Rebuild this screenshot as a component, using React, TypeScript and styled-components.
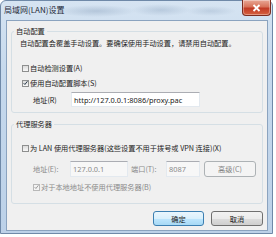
import React from "react";
import styled, { createGlobalStyle, css } from "styled-components";

const CJK = `"Noto Sans CJK SC", "Noto Sans", sans-serif`;
const LATIN = `"Noto Sans", "Noto Sans CJK SC", sans-serif`;

const GlobalStyle = createGlobalStyle`
  html, body {
    margin: 0;
    padding: 0;
    background: #ffffff;
  }
  * {
    box-sizing: border-box;
  }
`;

const Frame = styled.div`
  width: 273px;
  height: 234px;
  display: flex;
  flex-direction: column;
  padding: 0 4px 2px 0;
  border: 1px solid #6f89a8;
  border-radius: 6px 6px 0 0;
  background: linear-gradient(180deg, #d6e4f2 0%, #c6d9ed 30%, #bcd1e8 100%);
  font-family: ${CJK};
  color: #1b1b1b;
`;

const TitleBar = styled.div`
  height: 19px;
  display: flex;
  justify-content: space-between;
  align-items: flex-start;
  background: radial-gradient(ellipse 40px 6px at 95px 10px, rgba(120, 145, 175, 0.35), transparent),
    radial-gradient(ellipse 30px 6px at 160px 9px, rgba(120, 145, 175, 0.3), transparent),
    radial-gradient(ellipse 25px 5px at 210px 10px, rgba(120, 145, 175, 0.25), transparent);
`;

const Title = styled.div`
  font-size: 8px;
  line-height: 18px;
  padding-left: 3px;
  color: #1e2a38;
`;

const CloseButton = styled.div`
  width: 29px;
  height: 16px;
  margin-top: -1px;
  margin-right: -3px;
  display: flex;
  align-items: center;
  justify-content: center;
  border: 1px solid #7c2d20;
  border-top: none;
  border-radius: 0 0 4px 4px;
  background: linear-gradient(180deg, #e9a896 0%, #d8735a 45%, #c23b25 55%, #d5613f 100%);
  box-shadow: inset 0 0 0 1px rgba(255, 255, 255, 0.35);
`;

const Client = styled.div`
  flex: 1;
  margin-left: 5px;
  display: flex;
  flex-direction: column;
  background: #f0f0f0;
  border: 1px solid #8ba3bf;
`;

const GroupBox = styled.fieldset<{ $top: number; $bottom: number }>`
  margin: ${(p) => p.$top}px 4px 0;
  padding: 2px 4px ${(p) => p.$bottom}px 8px;
  min-width: 0;
  border: 1px solid #d5dfe5;
  border-radius: 3px;
  display: flex;
  flex-direction: column;
`;

const Legend = styled.legend`
  font-size: 7.2px;
  line-height: 10px;
  height: 10px;
  padding: 0 2px;
  margin-left: -6px;
  color: #1b1b1b;
`;

const Text = styled.div`
  font-size: 7.2px;
  line-height: 10px;
  white-space: nowrap;
`;

const Row = styled.div<{ $top: number; $indent: number; $h?: number }>`
  display: flex;
  align-items: center;
  height: ${(p) => p.$h ?? 10}px;
  margin-top: ${(p) => p.$top}px;
  margin-left: ${(p) => p.$indent}px;
  white-space: nowrap;
`;

const Label = styled.span<{ $disabled?: boolean; $width?: number; $ml?: number }>`
  font-size: 7.2px;
  line-height: 10px;
  margin-left: ${(p) => p.$ml ?? 0}px;
  color: ${(p) => (p.$disabled ? "#8a8a8a" : "#1b1b1b")};
  ${(p) =>
    p.$width &&
    css`
      width: ${p.$width}px;
      flex: none;
    `}
`;

const Box = styled.span<{ $disabled?: boolean }>`
  width: 7px;
  height: 7px;
  flex: none;
  margin-right: 1px;
  display: inline-flex;
  align-items: center;
  justify-content: center;
  border: 1px solid ${(p) => (p.$disabled ? "#b8b8b8" : "#8e8f8f")};
  background: ${(p) =>
    p.$disabled ? "#f4f4f4" : "linear-gradient(180deg, #dcdcdc 0%, #f7f7f7 100%)"};
`;

const Input = styled.div<{ $width: number; $disabled?: boolean; $h?: number }>`
  width: ${(p) => p.$width}px;
  height: ${(p) => p.$h ?? 15}px;
  flex: none;
  display: flex;
  align-items: center;
  padding-left: 2px;
  border: 1px solid #e3e9ef;
  border-top-color: #abadb3;
  background: ${(p) => (p.$disabled ? "#f7f7f7" : "#ffffff")};
  font-family: ${LATIN};
  font-size: 7.4px;
  color: ${(p) => (p.$disabled ? "#8a8a8a" : "#1b1b1b")};
`;

const Button = styled.div<{
  $width: number;
  $primary?: boolean;
  $disabled?: boolean;
  $h?: number;
  $ml?: number;
}>`
  width: ${(p) => p.$width}px;
  height: ${(p) => p.$h ?? 15}px;
  margin-left: ${(p) => p.$ml ?? 0}px;
  flex: none;
  display: flex;
  align-items: center;
  justify-content: center;
  border-radius: 3px;
  font-size: 7.2px;
  border: 1px solid #707070;
  background: linear-gradient(180deg, #f2f2f2 0%, #ebebeb 50%, #dddddd 51%, #cfcfcf 100%);
  color: #1b1b1b;
  ${(p) =>
    p.$primary &&
    css`
      border-color: #3c7fb1;
      background: linear-gradient(180deg, #eaf6fd 0%, #d9f0fc 50%, #bee6fd 51%, #a7d9f5 100%);
    `}
  ${(p) =>
    p.$disabled &&
    css`
      border-color: #adb2b5;
      background: #f4f4f4;
      color: #838383;
    `}
`;

const Actions = styled.div`
  display: flex;
  justify-content: flex-end;
  gap: 7px;
  margin: 7px 4px 0 0;
`;

const Check = ({ disabled }: { disabled?: boolean }) => (
  <svg width="6" height="6" viewBox="0 0 6 6">
    <path
      d="M0.8 3.2 L2.3 4.8 L5.3 0.9"
      fill="none"
      stroke={disabled ? "#9a9a9a" : "#2a3a4a"}
      strokeWidth="1.2"
    />
  </svg>
);

const Checkbox = ({
  checked,
  disabled,
  children,
}: {
  checked?: boolean;
  disabled?: boolean;
  children: React.ReactNode;
}) => (
  <>
    <Box $disabled={disabled}>{checked && <Check disabled={disabled} />}</Box>
    <Label $disabled={disabled}>{children}</Label>
  </>
);

export default function App() {
  return (
    <>
      <GlobalStyle />
      <Frame>
        <TitleBar>
          <Title>局域网(LAN)设置</Title>
          <CloseButton>
            <svg width="9" height="8" viewBox="0 0 9 8">
              <path d="M1.5 1 L7.5 7 M7.5 1 L1.5 7" stroke="#ffffff" strokeWidth="1.8" />
            </svg>
          </CloseButton>
        </TitleBar>
        <Client>
          <GroupBox $top={5} $bottom={5}>
            <Legend>自动配置</Legend>
            <Text>自动配置会覆盖手动设置。要确保使用手动设置，请禁用自动配置。</Text>
            <Row $top={15} $indent={2}>
              <Checkbox>自动检测设置(A)</Checkbox>
            </Row>
            <Row $top={5} $indent={2}>
              <Checkbox checked>使用自动配置脚本(S)</Checkbox>
            </Row>
            <Row $top={4} $indent={13} $h={15}>
              <Label $width={38}>地址(R)</Label>
              <Input $width={129}>http://127.0.0.1:8086/proxy.pac</Input>
            </Row>
          </GroupBox>
          <GroupBox $top={6} $bottom={11}>
            <Legend>代理服务器</Legend>
            <Row $top={12} $indent={2}>
              <Checkbox>为 LAN 使用代理服务器(这些设置不用于拨号或 VPN 连接)(X)</Checkbox>
            </Row>
            <Row $top={8} $indent={13} $h={16}>
              <Label $disabled $width={37}>
                地址(E):
              </Label>
              <Input $width={58} $h={16} $disabled>
                127.0.0.1
              </Input>
              <Label $disabled $width={35} $ml={3}>
                端口(T):
              </Label>
              <Input $width={34} $h={16} $disabled>
                8087
              </Input>
              <Button $width={52} $h={16} $ml={4} $disabled>
                高级(C)
              </Button>
            </Row>
            <Row $top={5} $indent={13}>
              <Checkbox checked disabled>
                对于本地地址不使用代理服务器(B)
              </Checkbox>
            </Row>
          </GroupBox>
          <Actions>
            <Button $width={51} $primary>
              确定
            </Button>
            <Button $width={52}>取消</Button>
          </Actions>
        </Client>
      </Frame>
    </>
  );
}
